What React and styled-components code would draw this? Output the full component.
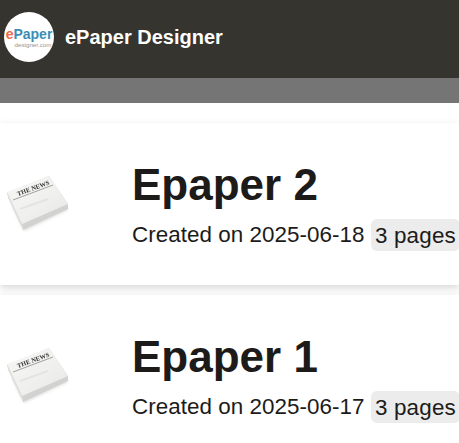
import React from "react";
import styled, { createGlobalStyle } from "styled-components";

const Global = createGlobalStyle`
  html, body { margin: 0; padding: 0; background: #fff; overflow: hidden; }
  body { font-family: "Liberation Sans", Arial, sans-serif; color: #1c1b1a; }
`;

const Page = styled.div`
  width: 459px;
  height: 443px;
  overflow: hidden;
`;

const Header = styled.header`
  height: 78px;
  background: #36342f;
  display: flex;
  align-items: center;
  padding: 0 0 4px 4px;
  box-sizing: border-box;
  gap: 11px;
`;

const Logo = styled.div`
  width: 50px;
  height: 50px;
  border-radius: 50%;
  background: #fff;
  display: flex;
  flex-direction: column;
  align-items: center;
  justify-content: center;
  line-height: 1;
`;

const LogoMain = styled.div`
  font-size: 14px;
  font-weight: 700;
  color: #3b8fb5;
  margin: 2px 0 1px;
  span { color: #ee6a48; }
`;

const LogoSub = styled.div`
  font-size: 6.2px;
  color: #949494;
  margin-left: 8px;
`;

const Title = styled.h1`
  margin: 0;
  font-size: 20px;
  font-weight: 700;
  color: #fff;
`;

const Band = styled.div`
  height: 25px;
  background: #757575;
`;

const List = styled.div`
  padding-top: 20px;
  display: flex;
  flex-direction: column;
  gap: 10px;
`;

const Card = styled.article`
  height: 162px;
  background: #fff;
  box-shadow: 0 3px 8px rgba(0, 0, 0, 0.16);
  display: flex;
  align-items: center;
  box-sizing: border-box;
`;

const Thumb = styled.div`
  width: 132px;
  flex: none;
  padding-left: 2px;
  box-sizing: border-box;
  display: flex;
  svg { display: block; }
`;

const Body = styled.div`
  display: flex;
  flex-direction: column;
  padding-top: 2px;
`;

const Name = styled.h2`
  margin: 0;
  font-size: 44px;
  line-height: 52px;
  font-weight: 700;
  color: #1c1b1a;
`;

const Meta = styled.div`
  font-size: 22.4px;
  line-height: 32px;
  margin-top: 8px;
  letter-spacing: 0.05px;
  white-space: nowrap;
`;

const Badge = styled.span`
  background: #ececec;
  border-radius: 6px;
  padding: 3.5px 4px;
  letter-spacing: 0.2px;
`;

function Newspaper({ id }) {
  return (
    <svg width="72" height="64" viewBox="0 0 72 64">
      <defs>
        <linearGradient id={`${id}-top`} x1="0" y1="0" x2="1" y2="1">
          <stop offset="0" stopColor="#f7f7f5" />
          <stop offset="0.6" stopColor="#efefed" />
          <stop offset="1" stopColor="#e6e6e4" />
        </linearGradient>
        <filter id={`${id}-soft`} x="-10%" y="-10%" width="120%" height="120%">
          <feGaussianBlur stdDeviation="0.4" />
        </filter>
        <filter id={`${id}-shadow`} x="-20%" y="-20%" width="140%" height="140%">
          <feGaussianBlur stdDeviation="1.4" />
        </filter>
      </defs>
      <path d="M10 34 L22 59 L66 38 L62 30 Z" fill="#000" opacity="0.12" filter={`url(#${id}-shadow)`} />
      <g filter={`url(#${id}-soft)`}>
        <path d="M5 21 L20 52 L21 58 L66 37 L66 32 L47 4 Z" fill="#d2d2d0" />
        <path d="M5 20 L20 52 L66 32 L47 4 Z" fill={`url(#${id}-top)`} />
        <path d="M5 20 L20 52 L21 58 L6 26 Z" fill="#dededc" />
        <path d="M11 28 L51 13" stroke="#6a6a64" strokeWidth="0.6" />
        <path d="M18 37 L46 27" stroke="#e4e4e2" strokeWidth="2" />
        <text
          x="16"
          y="24"
          fontFamily="Liberation Serif, serif"
          fontWeight="700"
          fontSize="6.4"
          fill="#33332f"
          transform="rotate(-20 16 24)"
        >
          THE NEWS
        </text>
      </g>
    </svg>
  );
}

const papers = [
  { id: "p2", name: "Epaper 2", date: "2025-06-18", pages: 3 },
  { id: "p1", name: "Epaper 1", date: "2025-06-17", pages: 3 },
];

export default function App() {
  return (
    <Page>
      <Global />
      <Header>
        <Logo>
          <LogoMain>
            <span>e</span>Paper
          </LogoMain>
          <LogoSub>designer.com</LogoSub>
        </Logo>
        <Title>ePaper Designer</Title>
      </Header>
      <Band />
      <List>
        {papers.map((p) => (
          <Card key={p.id}>
            <Thumb>
              <Newspaper id={p.id} />
            </Thumb>
            <Body>
              <Name>{p.name}</Name>
              <Meta>
                Created on {p.date} <Badge>{p.pages} pages</Badge>
              </Meta>
            </Body>
          </Card>
        ))}
      </List>
    </Page>
  );
}
